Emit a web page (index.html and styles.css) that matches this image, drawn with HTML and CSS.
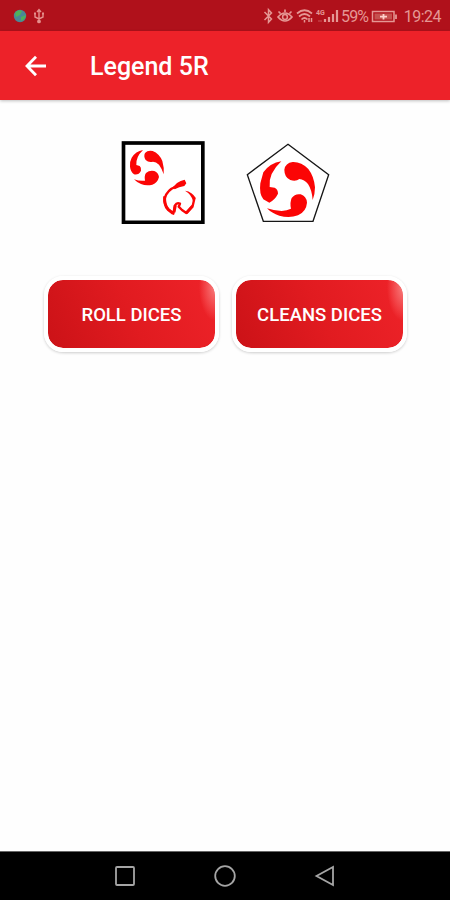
FILE: index.html
```html
<!DOCTYPE html>
<html lang="en">
<head>
    <meta charset="UTF-8">
    <meta name="viewport" content="width=device-width, initial-scale=1.0">
    <title>Legend 5R</title>
    <link rel="stylesheet" href="styles.css">
</head>
<body>
    <div class="screen">
        <div class="status-bar">
            <div class="status-left">
                <svg width="14" height="14" viewBox="0 0 14 14">
                    <circle cx="7" cy="7" r="6.2" fill="#4a8796"/>
                    <path d="M2 4Q5 0 9 2L7 6L3 8ZM8 8L13 6Q12 11 8 12Z" fill="#4fb05a"/>
                </svg>
                <svg width="12" height="16" viewBox="0 0 12 16" fill="none" stroke="#e58f8c" stroke-width="1.4">
                    <path d="M6 2V13M2 6V9L6 11L10 9V6M4 4L6 1.5L8 4"/>
                    <circle cx="6" cy="13.4" r="1.2" fill="#e58f8c"/>
                    <path d="M1 5.5H3M9 5.5H11" stroke-width="2"/>
                </svg>
            </div>
            <div class="status-right">
                <svg width="135" height="18" viewBox="0 0 135 18" fill="none" stroke="#e59794" stroke-width="1.5">
                    <!-- bluetooth -->
                    <path d="M1.500 5L8.500 12L5.500 15.300V2.700L8.500 6L1.500 13"/>
                    <!-- eye comfort -->
                    <path d="M15 10Q22 2 29 10Q22 18 15 10ZM17.500 6.500L15.500 4.500M22 5V2.500M26.500 6.500L28.500 4.500" stroke-width="1.700"/>
                    <circle cx="22" cy="10" r="2.4"/>
                    <!-- wifi -->
                    <path d="M34 6.500Q41.500 0 49 6.500M36 9.500Q41.500 4.500 47 9.500M38.500 12.500Q41.500 9.500 44.500 12.500" stroke-width="1.700"/>
                    <path d="M41.500 13V15.500M46 11V15M48.500 15V11"/>
                    <!-- signal -->
                    <text class="network" x="53" y="7.500">4G</text>
                    <path d="M62 15V12M66 15V10M70 15V7M74 15V3" stroke-width="2.200"/>
                    <path d="M55 14H59" stroke-width="1" opacity=".5"/>
                    <text class="status-text" x="78" y="15" textLength="28">59%</text>
                    <!-- battery -->
                    <rect x="109.500" y="4.500" width="21.500" height="10"/>
                    <rect x="111.500" y="6.500" width="17.500" height="6" fill="#c5514f" stroke="none"/>
                    <path d="M133 7.500V12" stroke-width="1.800"/>
                    <path d="M117 9.600H124M120.500 7V12.500" stroke="#ffd0cb" stroke-width="1.800"/>
                </svg>
                <span class="time">19:24</span>
            </div>
        </div>

        <header class="app-bar">
            <svg class="back" width="22" height="22" viewBox="0 0 22 22" fill="none" stroke="#fff" stroke-width="2.800">
                <path d="M21 11H2.500M11 1.800L2 11L11 20.200"/>
            </svg>
            <h1>Legend 5R</h1>
        </header>

        <main class="content">
            <div class="dice">
                <svg width="84" height="83" viewBox="18 18 252 249">
                    <rect x="25.500" y="24" width="238" height="238" fill="#fff" stroke="#000" stroke-width="11"/>
                    <g fill="#fb0505">
                        <path d="M84 45Q62 49 50 68Q43 81 45 95Q47 111 57 118Q71 121 78 107Q79 97 74 93L64 90Q62 66 84 45Z"/>
                        <path d="M90 54Q98 45 113 48Q133 56 142 78Q148 98 146 118Q140 99 132 89Q123 80 114 80Q101 84 92 75Q85 64 90 54Z"/>
                        <path d="M57 133Q74 139 90 137Q87 123 93 114Q103 105 118 108Q130 113 132 126Q128 143 112 149Q94 154 78 147Q65 142 57 133Z"/>
                        <path d="M174 156Q183 143 197 138L209 134L214 145L208 153Q192 155 179 163Z"/>
                        <path d="M210 167Q232 170 243 190L234 198Q229 178 210 167Z"/>
                    </g>
                    <g fill="none" stroke="#fb0505">
                        <path d="M183 155Q156 165 149 190Q147 210 161 224L175 236L180 211Q185 202 195 206L191 215L201 225L214 234L233 213L238 191" stroke-width="7" stroke-linejoin="round"/>
                        <path d="M149 184Q147 210 159 223L174 235M177 232L181 211M214 234L233 213" stroke-width="9"/>
                    </g>
                </svg>
                <svg width="84" height="80" viewBox="18 24 252 240">
                    <path d="M144 28L266 119L219 259H70L22 119Z" fill="#fff" stroke="#161616" stroke-width="4"/>
                    <g fill="#fb0505">
                        <path d="M124 79Q90 84 70 112L61 145Q57 177 70 193L88 203Q105 194 114 176Q114 163 104 158L89 156Q84 116 124 79Z"/>
                        <path d="M133 104Q136 84 158 81Q184 80 205 102Q222 124 225 157Q225 178 218 195Q216 165 204 147Q193 133 178 132Q168 140 151 135Q133 127 133 104Z"/>
                        <path d="M81 220Q105 228 125 228Q141 227 153 221Q149 203 155 189Q165 175 182 178Q199 183 201 203Q199 229 174 241Q148 250 118 242Q95 235 81 220Z"/>
                    </g>
                </svg>
            </div>

            <div class="buttons">
                <button class="btn btn-roll">ROLL DICES</button>
                <button class="btn btn-clean">CLEANS DICES</button>
            </div>
        </main>

        <nav class="nav-bar">
            <svg width="22" height="22" viewBox="0 0 22 22"><rect x="2" y="2" width="18" height="18" rx="1"/></svg>
            <svg width="22" height="22" viewBox="0 0 22 22"><circle cx="11" cy="11" r="9.800"/></svg>
            <svg width="22" height="22" viewBox="0 0 22 22"><path d="M19 2V20L2.500 11Z"/></svg>
        </nav>
    </div>
</body>
</html>
```
FILE: styles.css
```css
* {
    margin: 0;
    padding: 0;
    box-sizing: border-box;
}

body {
    font-family: Roboto, "Liberation Sans", sans-serif;
    background: #fff;
}

svg {
    display: block;
    flex: none;
}

.screen {
    height: 900px;
    display: flex;
    flex-direction: column;
    background: #fefefe;
}

.status-bar {
    height: 31px;
    display: flex;
    align-items: center;
    justify-content: space-between;
    padding: 1px 9px 0 13px;
    background: #b0111b;
}

.status-left {
    display: flex;
    align-items: center;
    gap: 6px;
}

.status-right {
    display: flex;
    align-items: center;
    gap: 6px;
}

.status-text {
    font-size: 16px;
    fill: #e59794;
    stroke: none;
}

.network {
    font-size: 7px;
    font-weight: 700;
    fill: #e59794;
    stroke: none;
}

.time {
    padding-top: 1px;
    color: #e59794;
    font-size: 16px;
    line-height: 18px;
    letter-spacing: -0.5px;
}

.app-bar {
    height: 69px;
    display: flex;
    align-items: center;
    padding-left: 25px;
    background: #ed2229;
    box-shadow: 0 1px 3px rgba(0, 0, 0, 0.25);
}

.app-bar h1 {
    margin-left: 43px;
    padding-top: 2px;
    color: #fff;
    font-size: 25px;
    font-weight: 500;
}

.content {
    flex: 1;
    padding-top: 41px;
}

.dice {
    display: flex;
    gap: 41px;
    padding-left: 121px;
    align-items: center;
}

.buttons {
    display: flex;
    gap: 13px;
    padding: 52px 0 0 44px;
}

.btn {
    width: 175px;
    height: 76px;
    padding-top: 1px;
    border: 4px solid #fff;
    border-radius: 19px;
    background: radial-gradient(ellipse 16px 34px at 100% 10%, #f77d7d, rgba(244, 70, 74, 0.6) 75%, transparent) padding-box,
        linear-gradient(65deg, #cb1217, #e11b20 50%, #ee2329) padding-box;
    box-shadow: 0 1px 3px rgba(0, 0, 0, 0.2);
    color: #fff;
    font-family: inherit;
    font-size: 18.5px;
    font-weight: 500;
    white-space: nowrap;
}

.nav-bar {
    height: 49px;
    display: flex;
    align-items: center;
    justify-content: center;
    gap: 78px;
    background: #000;
    border-top: 1px solid #666;
}

.nav-bar svg {
    fill: none;
    stroke: #a5a5a5;
    stroke-width: 1.8;
}
```
